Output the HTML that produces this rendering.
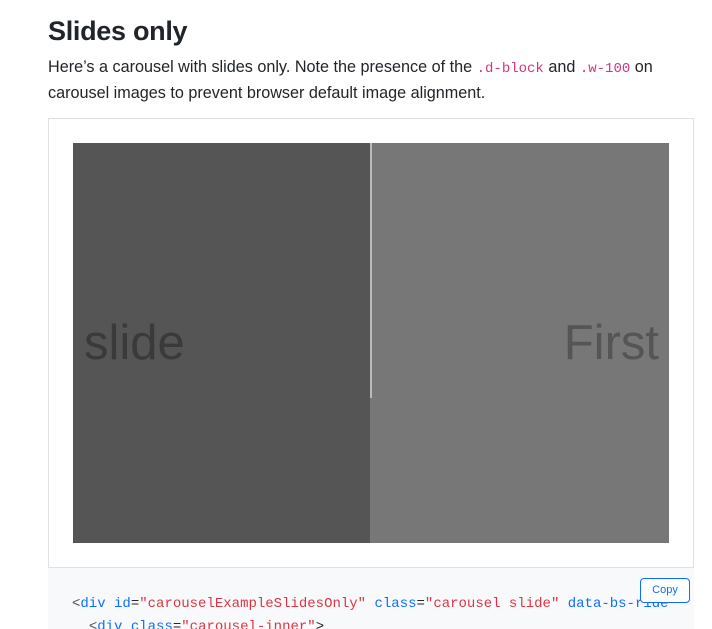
<!DOCTYPE html>
<html><head><style>
body{margin:0;background:#fff;font-family:"Liberation Sans",sans-serif;color:#212529;width:712px;height:629px;overflow:hidden;position:relative}
h2{position:absolute;left:48px;top:12px;margin:0;font-size:27px;font-weight:bold;line-height:38px;letter-spacing:-0.3px}
p{position:absolute;left:48px;top:55px;margin:0;width:640px;font-size:16.2px;line-height:24px}
code{font-family:"Liberation Mono",monospace;color:#d63384;font-size:14px}
.ex{position:absolute;left:48px;top:118px;width:644px;height:448px;border:1px solid #dee2e6}
.img{position:absolute;left:73px;top:143px;width:596px;height:400px;background:#777;overflow:hidden}
.l{position:absolute;left:0;top:0;width:297px;height:400px;background:#555}
.ln{position:absolute;left:297px;top:0;width:2px;height:255px;background:#bbb}
.t{position:absolute;top:171px;font-size:49px;line-height:58px}
.code{position:absolute;left:48px;top:568px;width:646px;height:61px;background:#f8f9fa;overflow:hidden}
pre{position:absolute;left:24px;top:25px;margin:0;font-family:"Liberation Mono",monospace;font-size:14px;line-height:23px;color:#212529;white-space:pre}
.b{color:#0d6efd}.r{color:#dc3545}.g{color:#495057}
.copy{position:absolute;left:592px;top:10px;width:48px;height:23px;border:1px solid #0d6efd;border-radius:4px;color:#0d6efd;font-size:11px;line-height:23px;text-align:center;background:#fff}
</style></head><body>
<h2>Slides only</h2>
<p>Here’s a carousel with slides only. Note the presence of the <code>.d-block</code> and <code>.w-100</code> on carousel images to prevent browser default image alignment.</p>
<div class="ex"></div>
<div class="img"><div class="l"></div><div class="ln"></div>
<div class="t" style="left:11px;color:#3a3a3a">slide</div>
<div class="t" style="right:10px;color:#555">First</div></div>
<div class="code"><pre><span class="g">&lt;</span><span class="b">div</span> <span class="b">id</span>=<span class="r">"carouselExampleSlidesOnly"</span> <span class="b">class</span>=<span class="r">"carousel slide"</span> <span class="b">data-bs-ride</span>
  <span class="g">&lt;</span><span class="b">div</span> <span class="b">class</span>=<span class="r">"carousel-inner"</span>&gt;</pre>
<div class="copy">Copy</div></div>
</body></html>
